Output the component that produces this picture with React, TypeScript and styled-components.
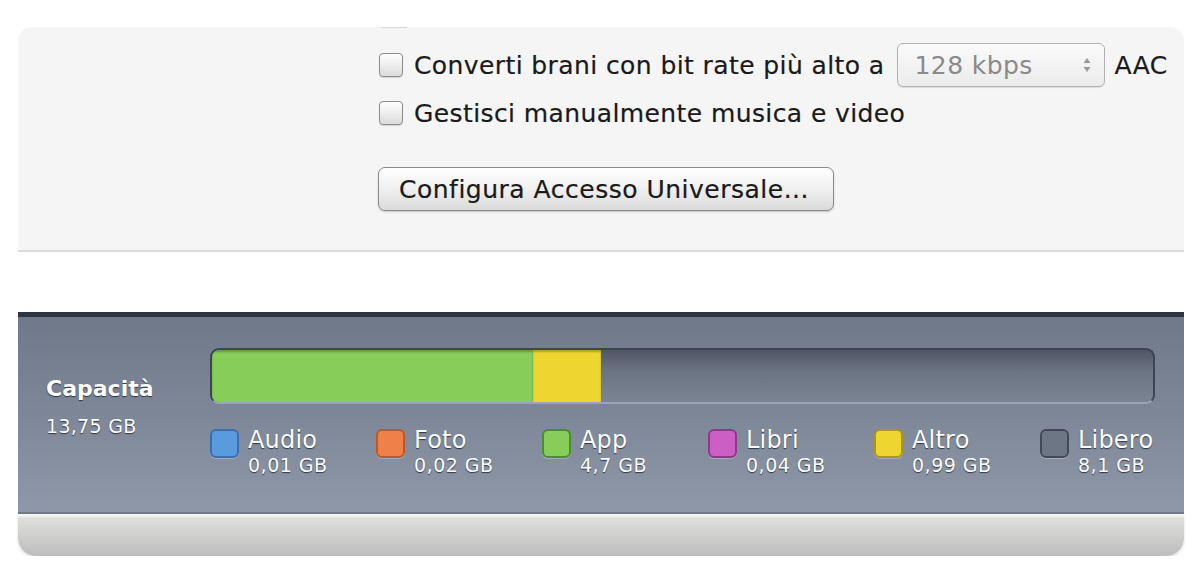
import React from 'react';
import styled, { createGlobalStyle } from 'styled-components';

const GlobalStyle = createGlobalStyle`
  html, body {
    margin: 0;
    padding: 0;
    background: #ffffff;
  }
  body {
    font-family: "DejaVu Sans", "Liberation Sans", sans-serif;
  }
`;

interface Segment {
  label: string;
  value: string;
  color: string;
  border: string;
  share: number;
}

const segments: Segment[] = [
  { label: 'Audio', value: '0,01 GB', color: '#5a9be0', border: '#3c6fa8', share: 0 },
  { label: 'Foto', value: '0,02 GB', color: '#f0804a', border: '#b85a2c', share: 0 },
  { label: 'App', value: '4,7 GB', color: '#86cd5a', border: '#4f8a34', share: 321 },
  { label: 'Libri', value: '0,04 GB', color: '#cc5fc4', border: '#8a3a86', share: 0 },
  { label: 'Altro', value: '0,99 GB', color: '#eed52f', border: '#a99520', share: 68 },
  { label: 'Libero', value: '8,1 GB', color: '#6d7685', border: '#434a56', share: 0 },
];

const Page = styled.div`
  width: 1166px;
  margin-left: 18px;
  padding-top: 27px;
`;

const OptionsPanel = styled.section`
  height: 225px;
  background: #f5f5f5;
  border-radius: 14px 14px 0 0;
  border-bottom: 2px solid #dcdcdc;
  padding-left: 361px;
  box-sizing: border-box;
  display: flex;
  flex-direction: column;
  color: #1a1a1a;
  font-size: 25px;
  letter-spacing: 0.4px;
  -webkit-text-stroke: 0.2px #1a1a1a;
`;

const ScrollStub = styled.div`
  width: 26px;
  height: 1px;
  margin-left: 2px;
  background: #d8d8d8;
`;

const CheckRow = styled.label<{ $top: number }>`
  display: flex;
  align-items: center;
  height: 44px;
  margin-top: ${p => p.$top}px;
  white-space: nowrap;
`;

const Check = styled.span`
  width: 22px;
  height: 22px;
  border: 1px solid #8d8d8d;
  border-radius: 4px;
  background: linear-gradient(#ffffff, #dcdcdc);
  box-shadow: 0 1px 1px rgba(0, 0, 0, 0.15);
  margin-right: 11px;
  flex: none;
`;

const Select = styled.div`
  display: flex;
  align-items: center;
  justify-content: space-between;
  width: 208px;
  height: 44px;
  box-sizing: border-box;
  margin: 0 10px 0 12px;
  padding: 0 12px 0 17px;
  border: 1px solid #b3b3b3;
  border-radius: 6px;
  background: linear-gradient(#fbfbfb, #ebebeb);
  box-shadow: 0 1px 1px rgba(0, 0, 0, 0.1);
  color: #8a8a8a;
  -webkit-text-stroke: 0;
`;

const Arrows = styled.svg`
  width: 10px;
  height: 16px;
`;

const ActionButton = styled.button`
  width: 456px;
  height: 44px;
  margin-top: 32px;
  margin-left: -1px;
  padding: 0 0 0 20px;
  text-align: left;
  border: 1px solid #8a8a8a;
  border-radius: 7px;
  background: linear-gradient(#ffffff, #f0f0f0 50%, #dadada);
  box-shadow: 0 1px 2px rgba(0, 0, 0, 0.2);
  font-family: inherit;
  font-size: 25px;
  letter-spacing: 0.5px;
  color: #1a1a1a;
  -webkit-text-stroke: 0.2px #1a1a1a;
`;

const Gap = styled.div`
  height: 60px;
`;

const StoragePanel = styled.section`
  height: 200px;
  box-sizing: border-box;
  border-top: 5px solid #2e3440;
  background: linear-gradient(#6f7989, #7d8797 50%, #8e98a9);
  display: grid;
  grid-template-columns: 192px 945px;
  color: #ffffff;
  text-shadow: 0 1px 1px rgba(20, 25, 35, 0.75);
`;

const CapacityBox = styled.div`
  padding: 59px 0 0 28px;
`;

const CapacityTitle = styled.div`
  font-size: 22px;
  font-weight: bold;
`;

const CapacityValue = styled.div`
  margin-top: 14px;
  font-size: 19px;
  letter-spacing: 0.3px;
`;

const Meter = styled.div`
  padding-top: 31px;
`;

const Bar = styled.div`
  display: flex;
  height: 56px;
  box-sizing: border-box;
  border-radius: 9px;
  border: 2px solid #3e4552;
  border-bottom-color: #9aa3b2;
  overflow: hidden;
  background: linear-gradient(#4f5665, #6b7483 40%, #7b8493);
`;

const Fill = styled.div<{ $color: string }>`
  height: 100%;
  background: ${p => p.$color};
  box-shadow: inset 0 2px 2px rgba(0, 0, 0, 0.25);
`;

const Legend = styled.div`
  display: grid;
  grid-template-columns: repeat(5, 166px) auto;
  margin-top: 22px;
`;

const LegendItem = styled.div`
  display: flex;
  align-items: flex-start;
`;

const Swatch = styled.span<{ $color: string; $border: string }>`
  width: 25px;
  height: 25px;
  margin-top: 3px;
  margin-right: 9px;
  border-radius: 6px;
  border: 2px solid ${p => p.$border};
  background: ${p => p.$color};
  box-shadow: 0 1px 0 rgba(255, 255, 255, 0.25);
  flex: none;
`;

const LegendText = styled.div`
  display: flex;
  flex-direction: column;
`;

const LegendLabel = styled.span`
  font-size: 24px;
  line-height: 28px;
  letter-spacing: 0.2px;
`;

const LegendValue = styled.span`
  font-size: 19px;
  line-height: 22px;
  letter-spacing: 0.5px;
`;

const Footer = styled.div`
  height: 44px;
  box-sizing: border-box;
  border-top: 2px solid #727a88;
  border-radius: 0 0 18px 18px;
  background: linear-gradient(#f4f4f2 0, #f4f4f2 2px, #dededc 4px, #bdbdbd);
  box-shadow: 0 2px 3px rgba(0, 0, 0, 0.12);
`;

export default function App() {
  return (
    <Page>
      <GlobalStyle />
      <OptionsPanel>
        <ScrollStub />
        <CheckRow $top={15}>
          <Check />
          Converti brani con bit rate più alto a
          <Select>
            <span>128 kbps</span>
            <Arrows viewBox="0 0 10 16">
              <path d="M5 1 L8.5 6 L1.5 6 Z M5 15 L8.5 10 L1.5 10 Z" fill="#9a9a9a" />
            </Arrows>
          </Select>
          AAC
        </CheckRow>
        <CheckRow $top={4}>
          <Check />
          Gestisci manualmente musica e video
        </CheckRow>
        <ActionButton>Configura Accesso Universale...</ActionButton>
      </OptionsPanel>
      <Gap />
      <StoragePanel>
        <CapacityBox>
          <CapacityTitle>Capacità</CapacityTitle>
          <CapacityValue>13,75 GB</CapacityValue>
        </CapacityBox>
        <Meter>
          <Bar>
            {segments
              .filter(s => s.share > 0)
              .map(s => (
                <Fill key={s.label} $color={s.color} style={{ width: s.share }} />
              ))}
          </Bar>
          <Legend>
            {segments.map(s => (
              <LegendItem key={s.label}>
                <Swatch $color={s.color} $border={s.border} />
                <LegendText>
                  <LegendLabel>{s.label}</LegendLabel>
                  <LegendValue>{s.value}</LegendValue>
                </LegendText>
              </LegendItem>
            ))}
          </Legend>
        </Meter>
      </StoragePanel>
      <Footer />
    </Page>
  );
}
